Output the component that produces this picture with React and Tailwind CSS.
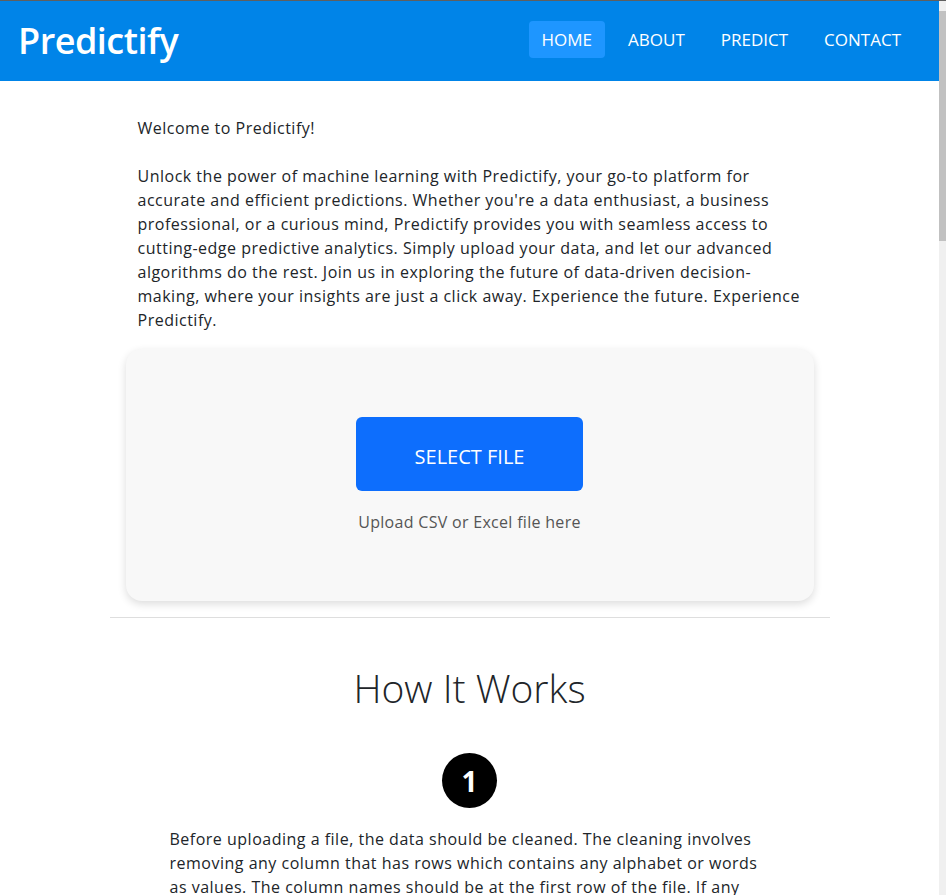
import React from 'react';

const navLinks = ['HOME', 'ABOUT', 'PREDICT', 'CONTACT'];

const steps = [
  'Before uploading a file, the data should be cleaned. The cleaning involves removing any column that has rows which contains any alphabet or words as values. The column names should be at the first row of the file. If any row has missing values, it should be filled or removed before uploading.',
  'Click on the select file button above and choose the CSV or Excel file from your computer. Once selected, the file is uploaded and the columns are read automatically.',
  'Pick the column you want to predict and let Predictify train the model. The results and the accuracy of the prediction will be shown on the next page.',
];

const Navbar = () => (
  <nav className="h-[80px] bg-[#0084e8] flex items-center justify-between pl-[18px] pr-[25px]">
    <a href="#" className="text-white text-[36px] font-semibold tracking-[-0.5px] leading-none -mt-[1px]">
      Predictify
    </a>
    <ul className="flex items-center gap-[10px] -mt-[3px]">
      {navLinks.map((link, i) => (
        <li key={link}>
          <a
            href="#"
            className={`block px-[13px] h-[37px] leading-[37px] rounded text-white text-[17px] ${
              i === 0 ? 'bg-[#1e96ff]' : ''
            }`}
          >
            {link}
          </a>
        </li>
      ))}
    </ul>
  </nav>
);

const UploadCard = () => (
  <div className="mx-4 bg-[#f8f8f8] rounded-2xl shadow-[0_3px_8px_rgba(0,0,0,0.14)] pt-[68px] pb-[67px] flex flex-col items-center">
    <button className="w-[227px] h-[74px] pt-[6px] rounded-md bg-[#0d6efd] text-white text-[20px] font-medium">
      SELECT FILE
    </button>
    <p className="mt-[19px] text-[#555] text-[16px] leading-6 tracking-[0.3px]">Upload CSV or Excel file here</p>
  </div>
);

// page chrome: the window's scrollbar on the right
const Scrollbar = () => (
  <div className="w-[7px] shrink-0 bg-[#f0f0f0] pt-[10px] pb-[10px] flex flex-col">
    <div className="h-[230px] bg-[#c1c1c1]" />
  </div>
);

export default function App() {
  return (
    <div className="h-[895px] overflow-hidden border-t border-[#5f5f5f] flex bg-white text-[#212529] font-['Open_Sans','Noto_Sans',sans-serif]">
      <div className="flex-1 min-w-0 overflow-hidden">
        <Navbar />
        <main className="max-w-[720px] mx-auto pb-16">
          <p className="px-7 pt-[35px] text-[16px] leading-6 tracking-[0.5px] mb-[17px]">
            Welcome to Predictify!
            <br />
            <br />
            Unlock the power of machine learning with Predictify, your go-to platform for accurate and
            efficient predictions. Whether you're a data enthusiast, a business professional, or a
            curious mind, Predictify provides you with seamless access to cutting-edge predictive
            analytics. Simply upload your data, and let our advanced algorithms do the rest. Join us in
            exploring the future of data-driven decision-making, where your insights are just a click
            away. Experience the future. Experience Predictify.
          </p>

          <UploadCard />

          <hr className="mt-4 border-t border-[#dedede]" />

          <section className="pt-[46px]">
            <h2 className="text-center text-[39px] font-light leading-[48px]">How It Works</h2>

            {steps.map((text, i) => (
              <div key={i} className="mt-[41px] flex flex-col items-center">
                <div className="w-[55px] h-[55px] rounded-full bg-black text-white flex items-center justify-center text-[28px] font-bold">
                  {i + 1}
                </div>
                <p className="mt-[19px] px-[60px] text-[16px] leading-6 tracking-[0.5px]">{text}</p>
              </div>
            ))}
          </section>
        </main>
      </div>
      <Scrollbar />
    </div>
  );
}
